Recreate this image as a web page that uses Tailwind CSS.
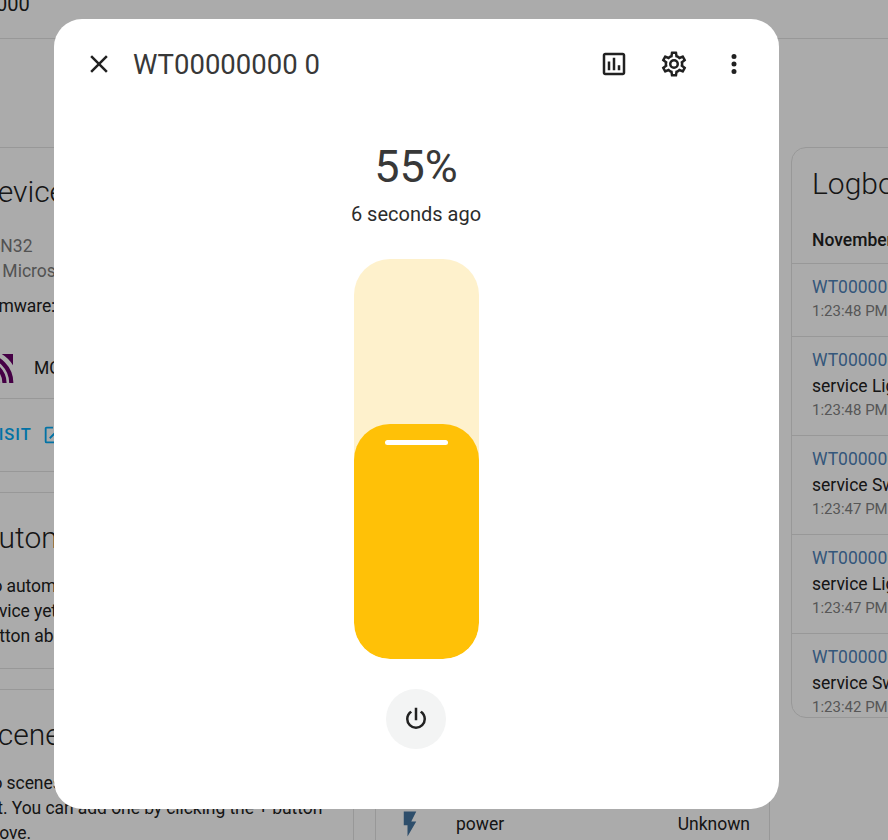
<!DOCTYPE html>
<html lang="en">
<head>
    <meta charset="UTF-8">
    <title>WT00000000 0</title>
    <script src="https://cdn.jsdelivr.net/npm/@tailwindcss/browser@4"></script>
</head>
<body class="font-['Roboto',sans-serif] bg-[#fdfdfd]">
    <div class="relative w-[888px] h-[840px] overflow-hidden text-[17.5px] leading-[25px] text-[#212121]">

        <!-- Device page behind the dialog -->
        <div class="h-[39px] border-b border-[#e0e0e0] overflow-hidden">
            <div class="ml-[-90px] mt-[-11px] text-[20px] leading-[30px] whitespace-nowrap">WT00000000</div>
        </div>

        <div class="flex gap-[21px] ml-[-41px] mt-[108px]">
            <!-- Left column -->
            <div class="w-[395px] shrink-0 flex flex-col gap-[20px]">
                <div class="h-[325px] border border-[#e0e0e0] rounded-[15px]">
                    <div class="h-[86px] pl-[18px] pt-[1px] flex items-center text-[30px] font-light">Device info</div>
                    <div class="px-[20px] text-[#7a7a7a]">ESN32</div>
                    <div class="px-[20px] text-[#7a7a7a]">by Microsoft</div>
                    <div class="pl-[19px] mt-[10px] tracking-[-0.1px]">Firmware: 1.0</div>
                    <div class="flex items-center gap-[20px] px-[20px] mt-[34px] h-[30px]">
                        <svg class="w-[34px] h-[30px] shrink-0" viewBox="0 0 34 30" fill="none" stroke="#660066" stroke-width="4.2">
                            <path d="M21.7 1H33V12.3A34 34 0 0 0 21.7 1Z" fill="#660066" stroke="none"/>
                            <path d="M4 2.7A27.3 27.3 0 0 1 31.3 30"/>
                            <path d="M4 9.5A20.5 20.5 0 0 1 24.5 30"/>
                            <path d="M4 16A14 14 0 0 1 18 30"/>
                        </svg>
                        <span>MQTT</span>
                    </div>
                    <div class="mt-[15px] border-t border-[#e0e0e0] h-[72px] flex items-center pl-[27px]">
                        <span class="text-[#03a9f4] text-[16.5px] font-medium tracking-[1px]">VISIT</span>
                        <svg class="w-[22px] h-[22px] ml-[10px] fill-[#03a9f4]" viewBox="0 0 24 24"><path d="M14,3V5H17.59L7.76,14.83L9.17,16.24L19,6.41V10H21V3M19,19H5V5H12V3H5C3.89,3 3,3.9 3,5V19A2,2 0 0,0 5,21H19A2,2 0 0,0 21,19V12H19V19Z"/></svg>
                    </div>
                </div>

                <div class="h-[177px] border border-[#e0e0e0] rounded-[15px]">
                    <div class="h-[81px] px-[20px] pt-[7px] flex items-center text-[30px] font-light">Automations</div>
                    <div class="px-[20px] tracking-[-0.07px]">No automations have been added using this device yet. You can add one by clicking the + button above.</div>
                </div>

                <div class="h-[177px] border border-[#e0e0e0] rounded-[15px]">
                    <div class="h-[81px] px-[20px] pt-[7px] flex items-center text-[30px] font-light">Scenes</div>
                    <div class="px-[20px] tracking-[-0.07px]">No scenes have been added using this device<br>yet. You can add one by clicking the + button above.</div>
                </div>
            </div>

            <!-- Middle column -->
            <div class="w-[395px] shrink-0">
                <div class="border border-[#e0e0e0] rounded-[15px] pt-[661px] pb-[40px]">
                    <div class="flex items-center h-[30px] pl-[19px] pr-[19px]">
                        <svg class="w-[30px] h-[30px] fill-[#44739e]" viewBox="0 0 24 24"><path d="M7,2V13H10V22L17,10H13L17,2H7Z"/></svg>
                        <span class="ml-[31px]">power</span>
                        <span class="ml-auto">Unknown</span>
                    </div>
                </div>
            </div>

            <!-- Logbook -->
            <div class="w-[395px] h-[571px] shrink-0 border border-[#e0e0e0] rounded-[15px] overflow-hidden">
                <div class="h-[70px] px-[20px] flex items-center text-[30px] font-light">Logbook</div>
                <div class="h-[46px] px-[20px] pt-[10px] font-medium border-b border-[#e0e0e0]">November 8, 2023</div>
                <div class="px-[20px] pt-[10px] pb-[14px] border-b border-[#e0e0e0]">
                    <div class="leading-[26px] text-[#4d80b5]">WT00000000 0</div>
                    <div class="leading-[22px] text-[15px] text-[#808080]">1:23:48 PM</div>
                </div>
                <div class="px-[20px] pt-[10px] pb-[14px] border-b border-[#e0e0e0]">
                    <div class="leading-[26px] text-[#4d80b5]">WT00000000 0</div>
                    <div class="leading-[26px]">service Light.turn_on</div>
                    <div class="leading-[22px] text-[15px] text-[#808080]">1:23:48 PM</div>
                </div>
                <div class="px-[20px] pt-[10px] pb-[14px] border-b border-[#e0e0e0]">
                    <div class="leading-[26px] text-[#4d80b5]">WT00000000 0</div>
                    <div class="leading-[26px]">service Switch.turn_on</div>
                    <div class="leading-[22px] text-[15px] text-[#808080]">1:23:47 PM</div>
                </div>
                <div class="px-[20px] pt-[10px] pb-[14px] border-b border-[#e0e0e0]">
                    <div class="leading-[26px] text-[#4d80b5]">WT00000000 0</div>
                    <div class="leading-[26px]">service Light.turn_on</div>
                    <div class="leading-[22px] text-[15px] text-[#808080]">1:23:47 PM</div>
                </div>
                <div class="px-[20px] pt-[10px]">
                    <div class="leading-[26px] text-[#4d80b5]">WT00000000 0</div>
                    <div class="leading-[26px]">service Switch.turn_on</div>
                    <div class="leading-[22px] text-[15px] text-[#808080]">1:23:42 PM</div>
                </div>
            </div>
        </div>

        <!-- Scrim -->
        <div class="absolute inset-0 bg-black/32"></div>

        <!-- Dialog -->
        <div class="absolute left-[54px] top-[19px] w-[725px] h-[790px] bg-white rounded-[28px] flex flex-col items-center">
            <div class="w-full flex items-center px-[15px] pt-[15px] h-[75px] shrink-0">
                <button class="w-[60px] h-[60px] flex items-center justify-center">
                    <svg class="w-[30px] h-[30px] fill-[#212121]" viewBox="0 0 24 24"><path d="M19,6.41L17.59,5L12,10.59L6.41,5L5,6.41L10.59,12L5,17.59L6.41,19L12,13.41L17.59,19L19,17.59L13.41,12L19,6.41Z"/></svg>
                </button>
                <div class="ml-[4px] text-[27.5px] text-[#383838]">WT00000000 0</div>
                <div class="ml-auto flex">
                    <button class="w-[60px] h-[60px] flex items-center justify-center">
                        <svg class="w-[30px] h-[30px] fill-[#212121]" viewBox="0 0 24 24"><path d="M9 17H7V10H9V17M13 17H11V7H13V17M17 17H15V13H17V17M19 19H5V5H19V19.1M19 3H5C3.9 3 3 3.9 3 5V19C3 20.1 3.9 21 5 21H19C20.1 21 21 20.1 21 19V5C21 3.9 20.1 3 19 3Z"/></svg>
                    </button>
                    <button class="w-[60px] h-[60px] flex items-center justify-center">
                        <svg class="w-[30px] h-[30px] fill-[#212121]" viewBox="0 0 24 24"><path d="M12,8A4,4 0 0,1 16,12A4,4 0 0,1 12,16A4,4 0 0,1 8,12A4,4 0 0,1 12,8M12,10A2,2 0 0,0 10,12A2,2 0 0,0 12,14A2,2 0 0,0 14,12A2,2 0 0,0 12,10M10,22C9.75,22 9.54,21.82 9.5,21.58L9.13,18.93C8.5,18.68 7.96,18.34 7.44,17.94L4.95,18.95C4.73,19.03 4.46,18.95 4.34,18.73L2.34,15.27C2.21,15.05 2.27,14.78 2.46,14.63L4.57,12.97L4.5,12L4.57,11L2.46,9.37C2.27,9.22 2.21,8.95 2.34,8.73L4.34,5.27C4.46,5.05 4.73,4.96 4.95,5.05L7.44,6.05C7.96,5.66 8.5,5.32 9.13,5.07L9.5,2.42C9.54,2.18 9.75,2 10,2H14C14.25,2 14.46,2.18 14.5,2.42L14.87,5.07C15.5,5.32 16.04,5.66 16.56,6.05L19.05,5.05C19.27,4.96 19.54,5.05 19.66,5.27L21.66,8.73C21.79,8.95 21.73,9.22 21.54,9.37L19.43,11L19.5,12L19.43,13L21.54,14.63C21.73,14.78 21.79,15.05 21.66,15.27L19.66,18.73C19.54,18.95 19.27,19.04 19.05,18.95L16.56,17.95C16.04,18.34 15.5,18.68 14.87,18.93L14.5,21.58C14.46,21.82 14.25,22 14,22H10M11.25,4L10.88,6.61C9.68,6.86 8.62,7.5 7.85,8.39L5.44,7.35L4.69,8.65L6.8,10.2C6.4,11.37 6.4,12.64 6.8,13.8L4.68,15.36L5.43,16.66L7.86,15.62C8.63,16.5 9.68,17.14 10.87,17.38L11.24,20H12.76L13.13,17.39C14.32,17.14 15.37,16.5 16.14,15.62L18.57,16.66L19.32,15.36L17.2,13.81C17.6,12.64 17.6,11.37 17.2,10.2L19.31,8.65L18.56,7.35L16.15,8.39C15.38,7.5 14.32,6.86 13.12,6.62L12.75,4H11.25Z"/></svg>
                    </button>
                    <button class="w-[60px] h-[60px] flex items-center justify-center">
                        <svg class="w-[30px] h-[30px] fill-[#212121]" viewBox="0 0 24 24"><path d="M12,16A2,2 0 0,1 14,18A2,2 0 0,1 12,20A2,2 0 0,1 10,18A2,2 0 0,1 12,16M12,10A2,2 0 0,1 14,12A2,2 0 0,1 12,14A2,2 0 0,1 10,12A2,2 0 0,1 12,10M12,4A2,2 0 0,1 14,6A2,2 0 0,1 12,8A2,2 0 0,1 10,6A2,2 0 0,1 12,4Z"/></svg>
                    </button>
                </div>
            </div>

            <div class="mt-[46px] ml-[-1px] h-[54px] leading-[54px] text-[45px] text-[#383838]">55%</div>
            <div class="mt-[9px] ml-[-1px] h-[22px] leading-[22px] text-[20px] text-[#2c2c2c]">6 seconds ago</div>

            <!-- Brightness slider -->
            <div class="relative mt-[34px] w-[125px] h-[400px] rounded-[36px] bg-[#fef1cc] overflow-hidden shrink-0">
                <div class="absolute inset-x-0 bottom-0 h-[235px] rounded-[36px] bg-[#ffc107]">
                    <div class="mx-auto mt-[16px] w-[63px] h-[5px] rounded-full bg-white"></div>
                </div>
            </div>

            <button class="mt-[30px] ml-[-1px] w-[60px] h-[60px] rounded-full bg-[#f3f4f4] flex items-center justify-center shrink-0">
                <svg class="w-[30px] h-[30px] fill-[#212121]" viewBox="0 0 24 24"><path d="M16.56,5.44L15.11,6.89C16.84,7.94 18,9.83 18,12A6,6 0 0,1 12,18A6,6 0 0,1 6,12C6,9.83 7.16,7.94 8.88,6.88L7.44,5.44C5.36,6.88 4,9.28 4,12A8,8 0 0,0 12,20A8,8 0 0,0 20,12C20,9.28 18.64,6.88 16.56,5.44M13,3H11V13H13"/></svg>
            </button>
        </div>
    </div>
</body>
</html>
